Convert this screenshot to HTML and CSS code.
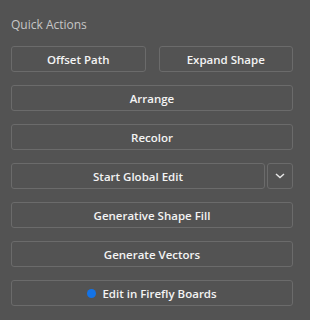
FILE: index.html
```html
<!DOCTYPE html>
<html lang="en">
<head>
    <meta charset="UTF-8">
    <title>Quick Actions</title>
    <link rel="stylesheet" href="styles.css">
</head>
<body>
    <div class="panel">
        <div class="panel-title">Quick Actions</div>
        <div class="actions">
            <div class="row">
                <button class="btn">Offset Path</button>
                <button class="btn">Expand Shape</button>
            </div>
            <button class="btn">Arrange</button>
            <button class="btn">Recolor</button>
            <div class="row split">
                <button class="btn">Start Global Edit</button>
                <button class="btn btn-icon" aria-label="More">
                    <svg width="10" height="6" viewBox="0 0 10 6">
                        <path d="M1 1 L5 4.5 L9 1" fill="none" stroke="#e6e6e6" stroke-width="1.5"/>
                    </svg>
                </button>
            </div>
            <button class="btn">Generative Shape Fill</button>
            <button class="btn">Generate Vectors</button>
            <button class="btn"><span class="dot"></span>Edit in Firefly Boards</button>
        </div>
    </div>
</body>
</html>
```

FILE: styles.css
```css
body {
    margin: 0;
    padding: 0;
    background: #535353;
    font-family: 'Open Sans', 'Noto Sans', sans-serif;
}

.panel {
    padding: 17px 17px 0 11px;
}

.panel-title {
    font-size: 12px;
    color: #c6c6c6;
    line-height: 16px;
    margin-bottom: 13px;
}

.actions {
    display: flex;
    flex-direction: column;
    gap: 13px;
}

.row {
    display: flex;
    gap: 13px;
}

.row .btn {
    flex: 1;
}

.row.split {
    gap: 2px;
}

.btn {
    height: 26px;
    margin: 0;
    padding: 0;
    background: #535353;
    border: 1.5px solid #6b6b6b;
    border-radius: 3px;
    color: #f4f4f4;
    font-family: inherit;
    font-size: 11.5px;
    font-weight: 600;
    display: flex;
    align-items: center;
    justify-content: center;
}

.row.split .btn-icon {
    flex: 0 0 26px;
}

.dot {
    width: 9px;
    height: 9px;
    border-radius: 50%;
    background: #1473e6;
    margin-right: 6px;
}
```
